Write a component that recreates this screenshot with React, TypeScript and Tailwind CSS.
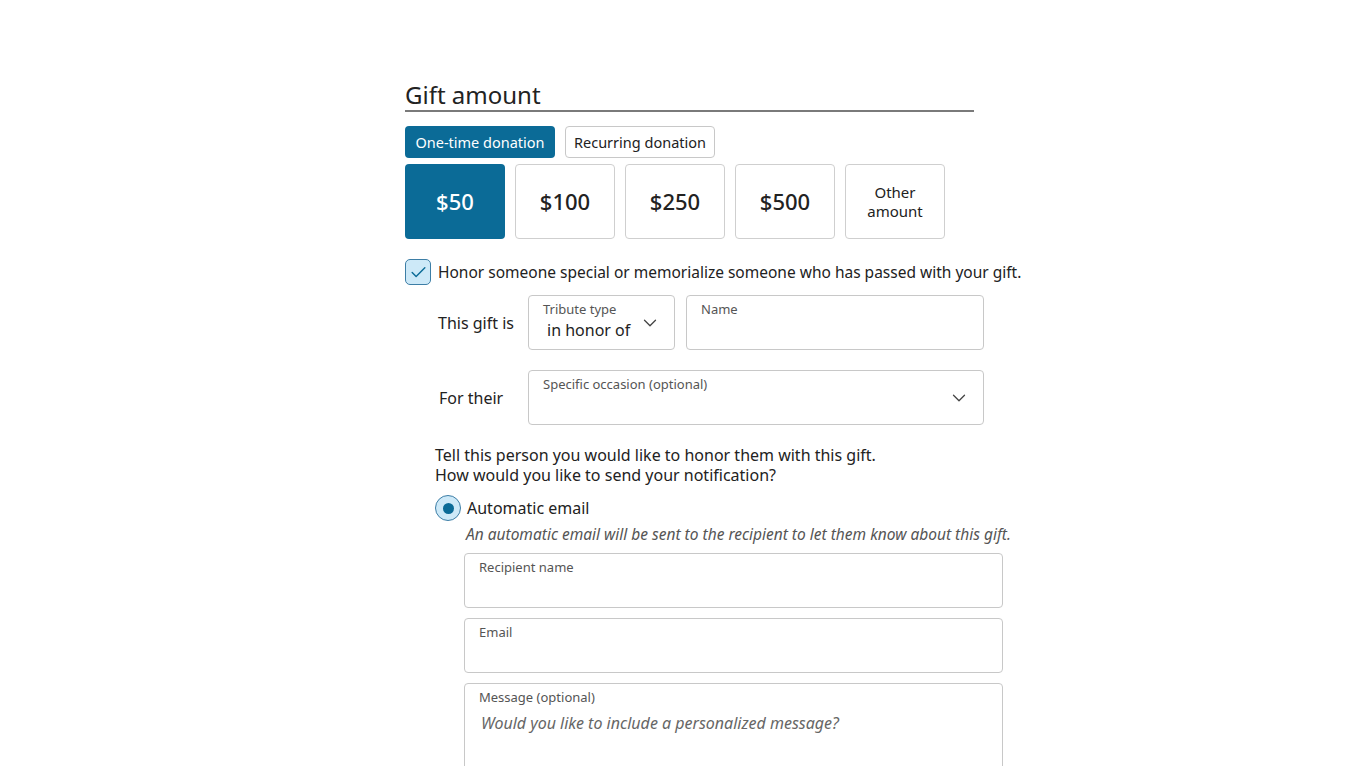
import { ChevronDown, Check } from "lucide-react";

const font = { fontFamily: '"Noto Sans", "Open Sans", sans-serif' };

function FloatField({
  label,
  value,
  chevron,
  className,
}: {
  label: string;
  value?: string;
  chevron?: boolean;
  className?: string;
}) {
  return (
    <div
      className={`relative h-[55px] shrink-0 rounded-[4px] border border-[#c8c8c8] bg-white px-[14px] pt-[4px] ${className ?? ""}`}
    >
      <div className="text-[13px] leading-[18px] text-[#555]">{label}</div>
      {value && <div className="pl-[4px] text-[16px] leading-[24px] text-[#222]">{value}</div>}
      {chevron && (
        <ChevronDown
          className="absolute right-[13px] top-1/2 h-[22px] w-[22px] -translate-y-1/2 text-[#444]"
          strokeWidth={1.4}
        />
      )}
    </div>
  );
}

export default function App() {
  const amounts = ["$50", "$100", "$250", "$500"];

  return (
    <div className="min-h-[766px] w-full bg-white text-[#222]" style={font}>
      <div className="ml-[405px] w-[620px] pt-[80px]">
        {/* Heading */}
        <div className="w-[569px] border-b-2 border-[#7a7a7a]">
          <h2 className="text-[24px] leading-[30px] text-[#222]">Gift amount</h2>
        </div>

        {/* Frequency tabs */}
        <div className="mt-[14px] flex gap-[10px]">
          <button className="h-[32px] w-[150px] rounded-[4px] bg-[#0b6b97] pt-[1px] text-[14.5px] text-white">
            One-time donation
          </button>
          <button className="h-[32px] w-[150px] rounded-[4px] border border-[#c8c8c8] bg-white pt-[1px] text-[14.5px] text-[#222]">
            Recurring donation
          </button>
        </div>

        {/* Amount options */}
        <div className="mt-[6px] flex gap-[10px]">
          {amounts.map((a, i) => (
            <button
              key={a}
              className={`flex h-[75px] w-[100px] items-center justify-center rounded-[4px] text-[22px] font-medium ${
                i === 0 ? "bg-[#0b6b97] text-white" : "border border-[#cfcfcf] bg-white text-[#222]"
              }`}
            >
              {a}
            </button>
          ))}
          <button className="flex h-[75px] w-[100px] items-center justify-center rounded-[4px] border border-[#cfcfcf] bg-white text-[15px] leading-[19px] text-[#222]">
            Other
            <br />
            amount
          </button>
        </div>

        {/* Tribute checkbox */}
        <div className="mt-[20px] flex items-center gap-[7px]">
          <span className="flex h-[26px] w-[26px] shrink-0 items-center justify-center rounded-[5px] border border-[#3d7ea6] bg-[#cde9f8]">
            <Check className="h-[19px] w-[19px] text-[#0b6b97]" strokeWidth={1.8} />
          </span>
          <span className="whitespace-nowrap pt-[1px] text-[15.5px]">
            Honor someone special or memorialize someone who has passed with your gift.
          </span>
        </div>

        {/* Tribute fields */}
        <div className="mt-[10px] flex items-center">
          <span className="w-[123px] pl-[33px] text-[16px]">This gift is</span>
          <FloatField label="Tribute type" value="in honor of" chevron className="w-[147px]" />
          <FloatField label="Name" className="ml-[11px] w-[298px]" />
        </div>

        <div className="mt-[20px] flex items-center">
          <span className="w-[123px] pl-[34px] text-[16px]">For their</span>
          <FloatField label="Specific occasion (optional)" chevron className="w-[456px]" />
        </div>

        {/* Notification */}
        <div className="ml-[30px] mt-[20px] text-[16px] leading-[20px]">
          <p>Tell this person you would like to honor them with this gift.</p>
          <p>How would you like to send your notification?</p>
        </div>

        <div className="ml-[30px] mt-[10px] flex items-center gap-[6px]">
          <span className="flex h-[26px] w-[26px] shrink-0 items-center justify-center rounded-full border border-[#3d7ea6] bg-[#cde9f8]">
            <span className="h-[11px] w-[11px] rounded-full bg-[#0b6b97]" />
          </span>
          <span className="text-[16px]">Automatic email</span>
        </div>

        <div className="ml-[59px]">
          <p className="mt-[2px] whitespace-nowrap pl-[2px] text-[15.5px] italic text-[#555]">
            An automatic email will be sent to the recipient to let them know about this gift.
          </p>
          <div className="mt-[7px] flex w-[539px] flex-col gap-[10px]">
            <FloatField label="Recipient name" />
            <FloatField label="Email" />
            <div className="h-[110px] rounded-[4px] border border-[#c8c8c8] bg-white px-[14px] pt-[4px]">
              <div className="text-[13px] leading-[18px] text-[#555]">Message (optional)</div>
              <div className="mt-[5px] pl-[2px] text-[16px] italic text-[#666]">
                Would you like to include a personalized message?
              </div>
            </div>
          </div>
        </div>
      </div>
    </div>
  );
}
